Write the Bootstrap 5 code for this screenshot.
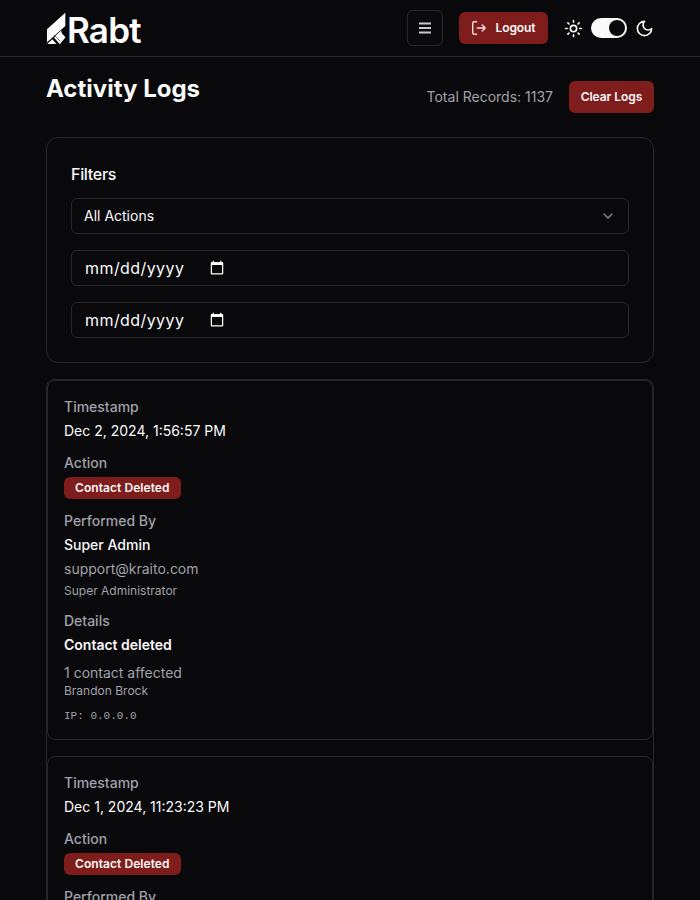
<!DOCTYPE html>
<html lang="en">
<head>
<meta charset="utf-8">
<meta name="viewport" content="width=device-width, initial-scale=1">
<title>Activity Logs</title>
<link href="https://cdn.jsdelivr.net/npm/bootstrap@5.3.0/dist/css/bootstrap.min.css" rel="stylesheet">
<style>
:root { --line: #27272a; --ink: #fafafa; --dim: #a1a1aa; --danger: #7f1d1d; }
body { background: #09090b; color: var(--ink); font-family: Inter, sans-serif; font-size: 14px; line-height: 20px; color-scheme: dark; height: 900px; overflow: hidden; }
.shell { padding-left: 46px; padding-right: 46px; }
.topbar { height: 57px; border-bottom: 1px solid var(--line); }
.brand svg { display: block; }
.brand-name { font-size: 35px; line-height: 36px; font-weight: 600; letter-spacing: -.8px; color: #fff; padding-top: 3px; }
.btn-menu { width: 36px; height: 36px; padding: 0; border: 1px solid var(--line); border-radius: 6px; color: #fff; }
.btn-red { background: var(--danger); color: var(--ink); font-size: 12px; line-height: 16px; font-weight: 600; letter-spacing: -.08px; height: 32px; padding: 0; border: 0; border-radius: 6px; }
.btn-red:hover { background: #6f1919; color: var(--ink); }
.btn-logout { width: 89px; }
.btn-clear { width: 85px; letter-spacing: -.05px; }
.toggle { width: 36px; height: 20px; padding: 2px; border-radius: 10px; background: var(--ink); }
.toggle-knob { width: 16px; height: 16px; border-radius: 50%; background: #09090b; }
.page-title { font-size: 24px; line-height: 32px; font-weight: 700; }
.dim { color: var(--dim); }
.medium { font-weight: 500; }
.strong-line { font-weight: 600; }
.panel { border: 1px solid var(--line); border-radius: 12px; }
.filters-title { font-size: 16px; line-height: 24px; font-weight: 500; letter-spacing: -.3px; margin-bottom: 12px; }
.field { height: 36px; border: 1px solid var(--line); border-radius: 6px; background: transparent; color: var(--ink); padding: 4px 12px; }
input.field { font-size: 16px; line-height: 24px; align-items: center; width: 100%; }
input.field::-webkit-datetime-edit { letter-spacing: .42px; padding-left: 1px; }
input.field::-webkit-calendar-picker-indicator { margin-left: -6px; }
.log-list { border: 1px solid var(--line); border-radius: 8px; }
.log { border: 1px solid var(--line); border-radius: 8px; padding: 16px; }
.tag { background: var(--danger); color: var(--ink); font-size: 12px; line-height: 16px; font-weight: 600; letter-spacing: .06px; padding: 3px 11px; border-radius: 6px; }
.fine { font-size: 12px; line-height: 16px; }
.mono { font-family: "Liberation Mono", monospace; font-size: 11px; line-height: 16px; padding-top: 1px; height: 16px; }
.section-gap { gap: 12px; }
</style>
<script src="https://cdn.jsdelivr.net/npm/bootstrap@5.3.0/dist/js/bootstrap.bundle.min.js"></script>
</head>
<body>
<header class="topbar shell d-flex align-items-center justify-content-between">
  <a class="brand d-flex align-items-center text-decoration-none" href="#" aria-label="Rabt">
    <svg width="21" height="33" viewBox="0 0 21 33" fill="#fff"><path d="M1 17.3 19.3.8V14L1 30.3z"/><path d="M15.2 18.6 9 24.2l-.9 1.6 5.8 6.4 5.6-6.9-3.7-4z"/><path d="m6.3 27.2 4.2 4.7H1.2z"/><path d="m8.2 23.2 6 6" stroke="#09090b" stroke-width=".6"/></svg>
    <span class="brand-name">Rabt</span>
  </a>
  <div class="d-flex align-items-center">
    <button class="btn btn-menu d-flex align-items-center justify-content-center me-3" aria-label="Menu">
      <svg width="14" height="14" viewBox="0 0 14 14" stroke="#c8ccc8" stroke-width="1.8"><path d="M1 2.5h12M1 7h12M1 11.5h12"/></svg>
    </button>
    <button class="btn btn-red btn-logout d-flex align-items-center justify-content-center">
      <svg class="me-2" width="16" height="16" viewBox="0 0 16 16" fill="none" stroke="#f3dede" stroke-width="1.4" stroke-linecap="round" stroke-linejoin="round"><path d="M5.5 1.8H3.2A1.5 1.5 0 0 0 1.7 3.3v9.4a1.5 1.5 0 0 0 1.5 1.5h2.3M6.2 8h8M11.2 5l3 3-3 3"/></svg>
      Logout
    </button>
    <svg class="ms-3" width="19" height="19" viewBox="0 0 24 24" fill="none" stroke="#fff" stroke-width="2" stroke-linecap="round" stroke-linejoin="round"><circle cx="12" cy="12" r="4"/><path d="M12 2v2M12 20v2M4.9 4.9l1.4 1.4M17.7 17.7l1.4 1.4M2 12h2M20 12h2M6.3 17.7l-1.4 1.4M19.1 4.9l-1.4 1.4"/></svg>
    <div class="toggle d-flex justify-content-end mx-2" role="switch" aria-checked="true"><div class="toggle-knob"></div></div>
    <svg width="19" height="19" viewBox="0 0 24 24" fill="none" stroke="#fff" stroke-width="2" stroke-linecap="round" stroke-linejoin="round"><path d="M12 3a6 6 0 0 0 9 9 9 9 0 1 1-9-9Z"/></svg>
  </div>
</header>

<main class="shell pt-3">
  <div class="d-flex justify-content-between mb-4">
    <h1 class="page-title mb-0">Activity Logs</h1>
    <div class="d-flex align-items-center gap-3 pt-2">
      <span class="dim">Total Records: 1137</span>
      <button class="btn btn-red btn-clear">Clear Logs</button>
    </div>
  </div>

  <section class="panel p-4 mb-3">
    <h2 class="filters-title">Filters</h2>
    <div class="d-flex flex-column gap-3">
      <div class="field d-flex align-items-center justify-content-between">
        <span>All Actions</span>
        <svg width="16" height="16" viewBox="0 0 16 16" fill="none" stroke="#8d8d92" stroke-width="1.3" stroke-linecap="round" stroke-linejoin="round"><path d="m4 6 4 4 4-4"/></svg>
      </div>
      <input class="field d-flex" type="date" aria-label="Start date">
      <input class="field d-flex" type="date" aria-label="End date">
    </div>
  </section>

  <section class="log-list d-flex flex-column gap-3">
    <article class="log d-flex flex-column section-gap">
      <div class="d-flex flex-column gap-1"><div class="dim medium">Timestamp</div><div>Dec 2, 2024, 1:56:57 PM</div></div>
      <div class="d-flex flex-column gap-1 align-items-start"><div class="dim medium">Action</div><span class="tag">Contact Deleted</span></div>
      <div class="d-flex flex-column gap-1">
        <div class="dim medium">Performed By</div>
        <div class="medium">Super Admin</div>
        <div class="dim">support@kraito.com</div>
        <div class="dim fine">Super Administrator</div>
      </div>
      <div class="d-flex flex-column">
        <div class="dim medium mb-1">Details</div>
        <div class="strong-line mb-2">Contact deleted</div>
        <div class="dim">1 contact affected</div>
        <div class="dim fine mb-2">Brandon Brock</div>
        <div class="dim mono">IP: 0.0.0.0</div>
      </div>
    </article>
    <article class="log d-flex flex-column section-gap">
      <div class="d-flex flex-column gap-1"><div class="dim medium">Timestamp</div><div>Dec 1, 2024, 11:23:23 PM</div></div>
      <div class="d-flex flex-column gap-1 align-items-start"><div class="dim medium">Action</div><span class="tag">Contact Deleted</span></div>
      <div class="d-flex flex-column gap-1">
        <div class="dim medium">Performed By</div>
      </div>
    </article>
  </section>
</main>
</body>
</html>
